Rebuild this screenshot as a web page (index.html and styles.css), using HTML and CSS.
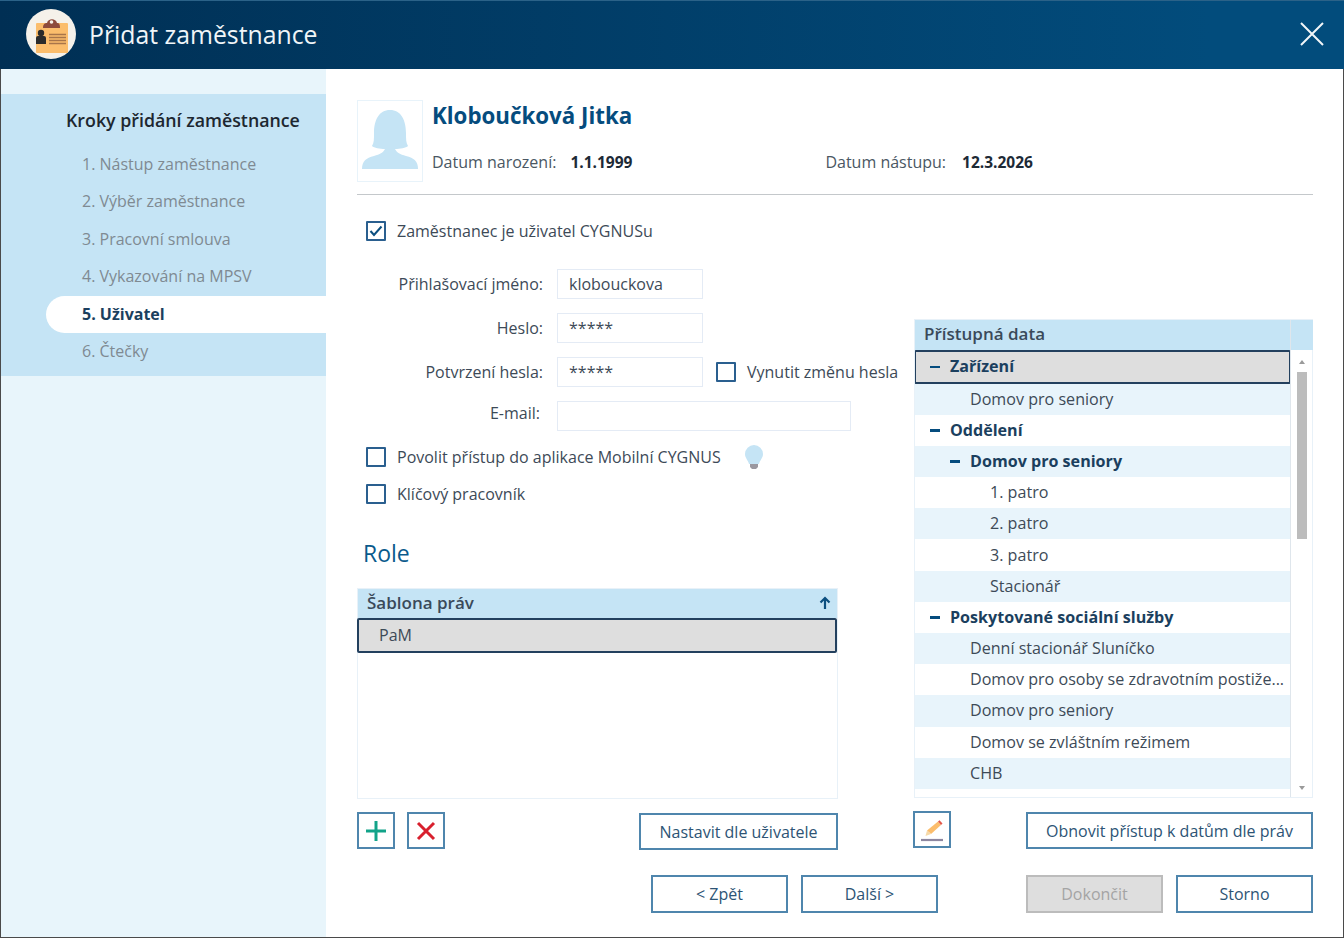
FILE: index.html
```html
<!DOCTYPE html>
<html lang="cs">
<head>
<meta charset="utf-8">
<title>Přidat zaměstnance</title>
<link rel="stylesheet" href="styles.css">
</head>
<body>
<div class="window">
  <header class="titlebar">
    <svg class="logo" width="50" height="50" viewBox="0 0 50 50">
      <circle cx="25" cy="25" r="25" fill="#f5f1ea"/>
      <rect x="10" y="14" width="32" height="30" rx="1" fill="#fbbd6c"/>
      <path d="M17 19c0-4 2-5 4-5 1-5 9-5 10 0 2 0 3 1 3 5z" fill="#8d4a3c"/>
      <circle cx="25.500" cy="13" r="1.800" fill="#f5f1ea"/>
      <circle cx="15" cy="24" r="3.200" fill="#2b2b2b"/>
      <path d="M10 35v-6q0-2 2-2h6q2 0 2 2v6z" fill="#2b2b2b"/>
      <path d="M23 25.500h17M23 28.500h17M23 31.500h17M23 34.500h17" stroke="#a8754a" stroke-width="1.300"/>
    </svg>
    <h1 class="title">Přidat zaměstnance</h1>
    <svg class="close" width="26" height="26" viewBox="0 0 26 26">
      <path d="M2 2l22 22M24 2L2 24" stroke="#f2f6f9" stroke-width="2" fill="none"/>
    </svg>
  </header>
  <div class="content">
    <nav class="sidebar">
      <div class="steps">
        <div class="steps-title">Kroky přidání zaměstnance</div>
        <div class="step">1. Nástup zaměstnance</div>
        <div class="step">2. Výběr zaměstnance</div>
        <div class="step">3. Pracovní smlouva</div>
        <div class="step">4. Vykazování na MPSV</div>
        <div class="step step-active">5. Uživatel</div>
        <div class="step">6. Čtečky</div>
      </div>
    </nav>
    <main class="main">
      <section class="person">
        <div class="photo">
          <svg width="60" height="62" viewBox="0 0 60 62">
            <path d="M2 60c0-8 4-11 12-13 6-2 9-3 11-7-5 0-11-1-13-3 2-3 2-7 2-13C14 11 19 1 30 1s16 10 16 23c0 6 0 10 2 13-2 2-8 3-13 3 2 4 5 5 11 7 8 2 12 5 12 13z" fill="#c5e4f5"/>
          </svg>
        </div>
        <div class="person-info">
          <div class="person-name">Kloboučková Jitka</div>
          <div class="person-dates">
            <span class="date-label">Datum narození:</span><span class="date-value date-birth">1.1.1999</span>
            <span class="date-label">Datum nástupu:</span><span class="date-value date-start">12.3.2026</span>
          </div>
        </div>
      </section>
      <div class="columns">
        <div class="col-left">
          <label class="check check-user"><span class="box box-on"><svg width="14" height="12" viewBox="0 0 14 12"><path d="M1.500 6l3.500 4 7.500-8.500" stroke="#0b4f80" stroke-width="2" fill="none"/></svg></span>Zaměstnanec je uživatel CYGNUSu</label>
          <div class="field"><span class="field-label">Přihlašovací jméno:</span><span class="input">klobouckova</span></div>
          <div class="field"><span class="field-label">Heslo:</span><span class="input">*****</span></div>
          <div class="field"><span class="field-label">Potvrzení hesla:</span><span class="input">*****</span><label class="check check-force"><span class="box"></span>Vynutit změnu hesla</label></div>
          <div class="field"><span class="field-label field-label-email">E-mail:</span><span class="input input-wide"></span></div>
          <label class="check check-mobile"><span class="box"></span>Povolit přístup do aplikace Mobilní CYGNUS
            <svg class="bulb" width="20" height="26" viewBox="0 0 20 26"><path d="M10 1a9 9 0 0 0-9 9c0 4 3 6 4 10h10c1-4 4-6 4-10a9 9 0 0 0-9-9z" fill="#c5e4f5"/><path d="M6 20h8v3l-2 2H8l-2-2z" fill="#9a98a0"/></svg>
          </label>
          <label class="check check-key"><span class="box"></span>Klíčový pracovník</label>
          <h2 class="role">Role</h2>
          <div class="table">
            <div class="table-head">Šablona práv<svg width="12" height="14" viewBox="0 0 12 14"><path d="M6 13V3M1.500 6.500L6 2l4.500 4.500" stroke="#0b4f80" stroke-width="2.200" fill="none"/></svg></div>
            <div class="table-sel">PaM</div>
          </div>
          <div class="toolbar toolbar-left">
            <button class="btn-icon"><svg width="24" height="24" viewBox="0 0 24 24"><path d="M12 2v20M2 12h20" stroke="#12a389" stroke-width="3"/></svg></button>
            <button class="btn-icon btn-del"><svg width="20" height="20" viewBox="0 0 20 20"><path d="M2 2l16 16M18 2L2 18" stroke="#d8202e" stroke-width="3"/></svg></button>
            <button class="btn btn-set">Nastavit dle uživatele</button>
          </div>
        </div>
        <div class="col-right">
          <div class="tree">
            <div class="tree-main">
              <div class="tree-head">Přístupná data</div>
              <div class="row row-sel row-bold"><span class="minus"></span>Zařízení</div>
              <div class="row row-alt lvl2">Domov pro seniory</div>
              <div class="row row-bold"><span class="minus"></span>Oddělení</div>
              <div class="row row-alt row-bold lvl2b"><span class="minus"></span>Domov pro seniory</div>
              <div class="row lvl3">1. patro</div>
              <div class="row row-alt lvl3">2. patro</div>
              <div class="row lvl3">3. patro</div>
              <div class="row row-alt lvl3">Stacionář</div>
              <div class="row row-bold"><span class="minus"></span>Poskytované sociální služby</div>
              <div class="row row-alt lvl2">Denní stacionář Sluníčko</div>
              <div class="row lvl2">Domov pro osoby se zdravotním postiže...</div>
              <div class="row row-alt lvl2">Domov pro seniory</div>
              <div class="row lvl2">Domov se zvláštním režimem</div>
              <div class="row row-alt lvl2">CHB</div>
            </div>
            <div class="scroll">
              <div class="scroll-head"></div>
              <div class="arrow-up"></div>
              <div class="thumb"></div>
              <div class="arrow-down"></div>
            </div>
          </div>
          <div class="toolbar toolbar-right">
            <button class="btn-icon"><svg width="28" height="28" viewBox="0 0 28 28"><path d="M9 14.500L20 5.500l3 3.500-10 9z" fill="#fbbd6c"/><path d="M9 14.500l4 3.500-5.500 2z" fill="#f6d9a8"/><path d="M20 5.500l1.500-1.300 3 3.300L23 9z" fill="#e2574c"/><path d="M3 24h22" stroke="#8d87a0" stroke-width="2.200"/></svg></button>
            <button class="btn btn-renew">Obnovit přístup k datům dle práv</button>
          </div>
        </div>
      </div>
      <footer class="footer">
        <button class="btn btn-foot">&lt; Zpět</button>
        <button class="btn btn-foot btn-next">Další &gt;</button>
        <button class="btn btn-foot btn-disabled">Dokončit</button>
        <button class="btn btn-foot">Storno</button>
      </footer>
    </main>
  </div>
</div>
</body>
</html>
```
FILE: styles.css
```css
* { box-sizing: border-box; }
html, body { margin: 0; padding: 0; background: #fff; }
body { font-family: "Open Sans", "Noto Sans", sans-serif; font-size: 16px; color: #3d4a57; width: 1344px; height: 938px; overflow: hidden; }
.window { width: 1344px; height: 938px; display: flex; flex-direction: column; border: 1px solid #4a4a4a; border-top: 0; }
.titlebar { height: 69px; margin: 0 -1px; flex: none; display: flex; align-items: center; padding: 0 19px 2px 26px; background: linear-gradient(90deg, #002f54 0%, #024c7c 90%); border-top: 1px solid #2b6288; }
.logo { flex: none; }
.title { margin: 0 0 0 13px; font-size: 24.800px; font-weight: 400; color: #f0f5f8; flex: 1; white-space: nowrap; }
.close { flex: none; }
.content { flex: 1; display: flex; min-height: 0; }
.sidebar { width: 325px; flex: none; background: #e8f5fb; padding-top: 25px; }
.steps { background: #c5e4f5; height: 282px; padding-top: 8px; }
.steps-title { font-size: 17.800px; font-weight: 600; color: #1d2730; margin-left: 65px; height: 44px; line-height: 36px; white-space: nowrap; }
.step { height: 37.400px; line-height: 37.400px; padding-left: 81px; font-size: 16px; color: #7f8a92; white-space: nowrap; }
.step-active { margin-left: 45px; padding-left: 36px; background: #fff; border-radius: 19px 0 0 19px; color: #1b3f5e; font-weight: 700; }
.main { flex: 1; padding: 31px 30px 0 31px; display: flex; flex-direction: column; min-width: 0; }
.person { display: flex; height: 95px; border-bottom: 1px solid #c4c8cb; }
.photo { width: 66px; height: 82px; border: 1px solid #e8f3fa; display: flex; align-items: flex-end; justify-content: center; padding-bottom: 10px; flex: none; }
.person-info { margin-left: 9px; padding-top: 1px; flex: 1; }
.person-name { font-size: 22.300px; font-weight: 700; color: #054c7e; line-height: 30px; white-space: nowrap; }
.person-dates { margin-top: 21px; display: flex; line-height: 20px; white-space: nowrap; }
.date-label { color: #4a5763; }
.date-value { margin-left: 14px; font-size: 15.500px; font-weight: 700; color: #1d2a36; }
.date-birth { width: 255px; }
.date-start { margin-left: 16px; }
.columns { display: flex; flex: none; height: 655px; }
.col-left { width: 557px; flex: none; display: flex; flex-direction: column; }
.col-right { width: 399px; flex: none; display: flex; flex-direction: column; padding-top: 124px; }
.check { display: flex; align-items: center; white-space: nowrap; color: #3d4a57; }
.box { width: 20px; height: 20px; border: 2px solid #2a5f8f; border-radius: 1px; background: #fff; display: flex; align-items: center; justify-content: center; margin-right: 11px; flex: none; }
.check-user { margin: 25px 0 0 9px; height: 22px; }
.field { display: flex; align-items: center; height: 30px; margin-top: 14px; }
.check-user + .field { margin-top: 27px; }
.field-label { width: 186px; text-align: right; flex: none; margin-right: 14px; white-space: nowrap; }
.field-label-email { width: 183px; margin-right: 17px; margin-bottom: 6px; }
.input { width: 146px; height: 30px; border: 1px solid #e4ebf5; padding: 0 11px; line-height: 28px; font-size: 16px; color: #3d4a57; }
.input-wide { width: 294px; }
.check-force { margin-left: 13px; }
.check-mobile { margin: 13px 0 0 9px; height: 26px; }
.bulb { margin-left: 23px; }
.check-key { margin: 11px 0 0 9px; height: 26px; }
.role { margin: 30px 0 0 6px; font-size: 23px; font-weight: 400; color: #0a5a8c; line-height: 32px; height: 32px; }
.table { margin: 19px 0 0 0; width: 481px; height: 211px; border: 1px solid #e8f1f8; flex: none; }
.table-head { height: 29px; background: #c5e4f5; display: flex; align-items: center; justify-content: space-between; padding: 0 6px 2px 9px; font-weight: 600; font-size: 17px; color: #3a4a5a; }
.table-sel { height: 35px; background: #dedede; border: 2px solid #23405e; border-radius: 2px; margin: 0 0 0 -1px; width: 480px; padding-left: 20px; line-height: 31px; font-size: 16px; }
.toolbar { display: flex; align-items: flex-start; height: 38px; margin-top: 13px; }
.toolbar-left { width: 481px; }
.btn-icon { width: 38px; height: 37px; padding: 0; border: 2px solid #4f86ad; background: #fff; display: flex; align-items: center; justify-content: center; flex: none; }
.btn-del { margin-left: 12px; }
.btn { height: 38px; border: 2px solid #4f86ad; background: #fff; font-family: inherit; font-size: 16px; color: #2d5475; padding: 0; white-space: nowrap; }
.btn-set { width: 199px; height: 37px; margin-left: auto; margin-top: 1px; }
.tree { display: flex; height: 479px; border: 1px solid #e8f1f8; flex: none; }
.tree-main { flex: 1; min-width: 0; overflow: hidden; }
.tree-head { height: 30px; background: #c5e4f5; line-height: 28px; padding-left: 9px; font-weight: 600; font-size: 17px; color: #3a4a5a; }
.row { height: 31.200px; line-height: 31px; white-space: nowrap; font-size: 16.100px; color: #3d4a57; display: flex; align-items: center; }
.row-alt { background: #e8f4fb; }
.row-bold { padding-left: 15px; font-weight: 700; color: #1b3f5e; }
.row-sel { height: 33.500px; margin: 0 -1px; padding-left: 14px; background: #dedede; border: 2px solid #23405e; border-radius: 2px; }
.minus { width: 10px; height: 2.500px; background: #054c7e; margin-right: 10px; flex: none; }
.lvl2 { padding-left: 55px; }
.lvl2b { padding-left: 35px; }
.lvl3 { padding-left: 75px; }
.scroll { width: 22px; flex: none; background: #fff; border-left: 1px solid #dfe6ec; display: flex; flex-direction: column; align-items: center; }
.scroll-head { height: 30px; width: 22px; background: #c5e4f5; flex: none; }
.arrow-up { margin-top: 10px; width: 0; height: 0; border: 3.500px solid transparent; border-top: 0; border-bottom: 4px solid #9a9a9a; flex: none; }
.thumb { margin-top: 8px; width: 10px; height: 167px; background: #bcbcbc; flex: none; }
.arrow-down { margin-top: auto; margin-bottom: 7px; width: 0; height: 0; border: 3.500px solid transparent; border-bottom: 0; border-top: 4px solid #9a9a9a; flex: none; }
.toolbar-right { margin-left: -1px; }
.btn-renew { width: 287px; height: 37px; margin-left: auto; margin-top: 1px; }
.footer { display: flex; margin-top: 25px; justify-content: flex-end; }
.btn-foot { width: 137px; margin-left: 13px; }
.btn-next { margin-right: 75px; }
.btn-disabled { background: #dedede; border-color: #bcbcbc; color: #a4a4a4; }
```
